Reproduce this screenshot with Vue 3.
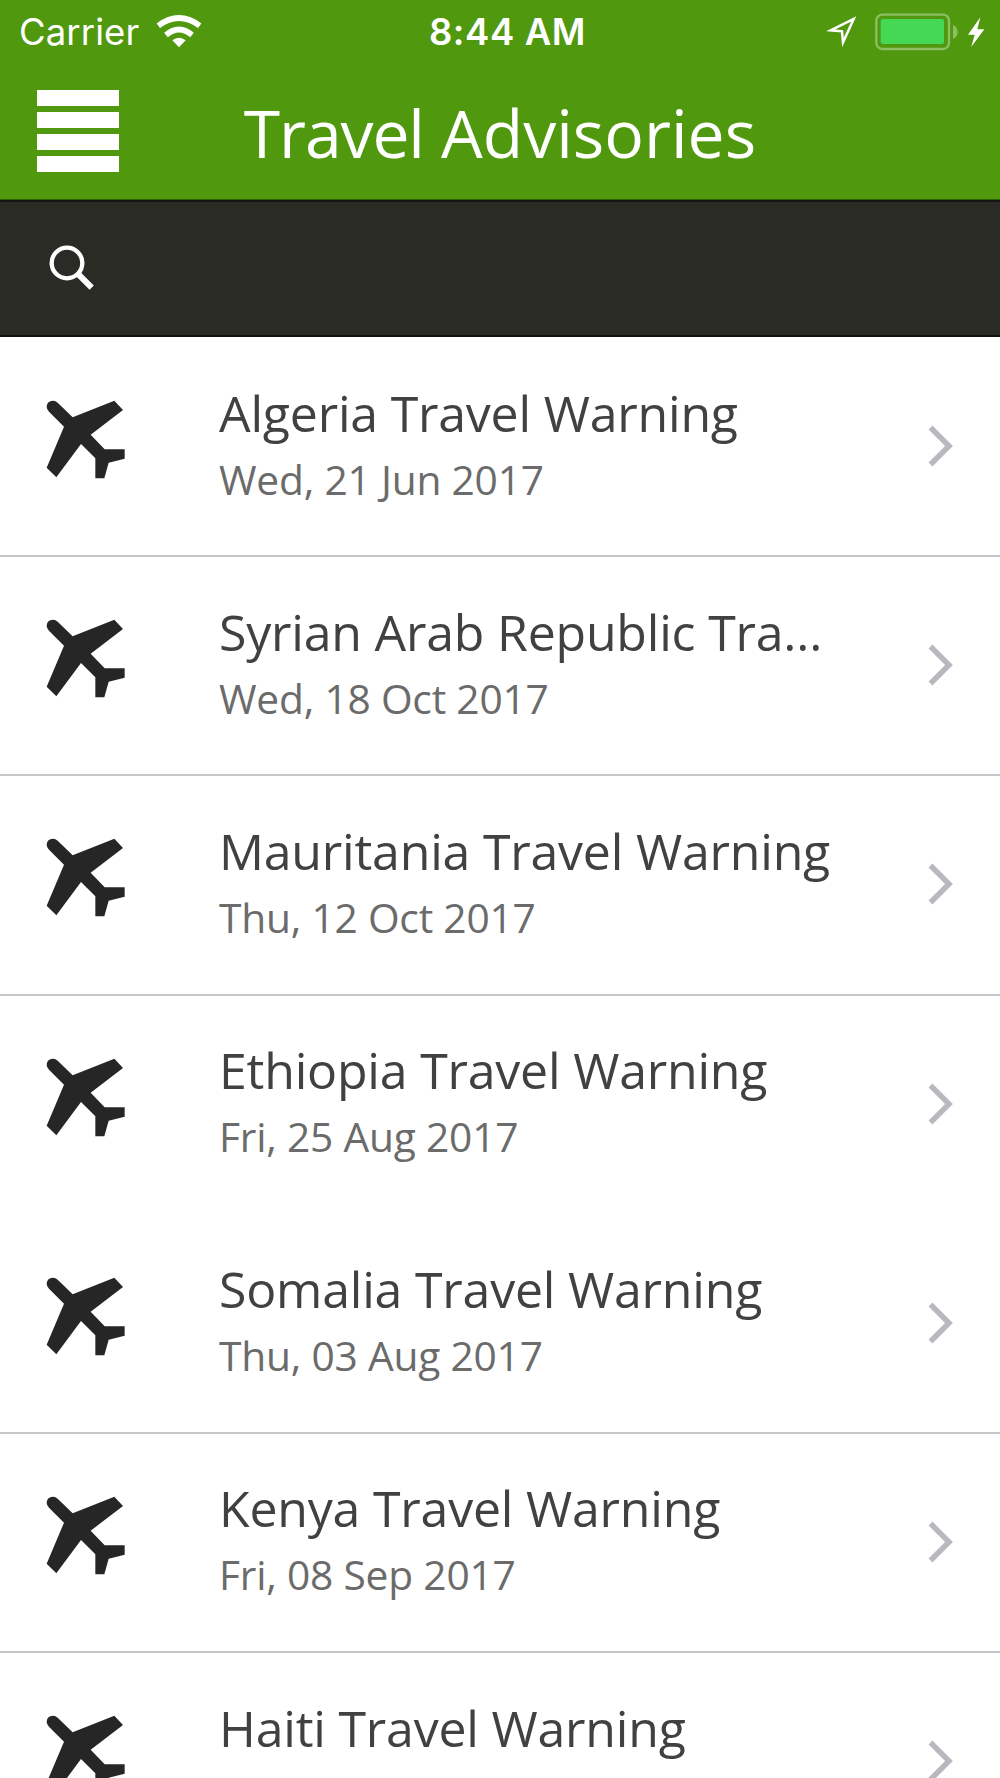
<script setup>
const advisories = [
  { id: 1, title: 'Algeria Travel Warning', date: 'Wed, 21 Jun 2017' },
  { id: 2, title: 'Syrian Arab Republic Tra...', date: 'Wed, 18 Oct 2017' },
  { id: 3, title: 'Mauritania Travel Warning', date: 'Thu, 12 Oct 2017' },
  { id: 4, title: 'Ethiopia Travel Warning', date: 'Fri, 25 Aug 2017', plain: true },
  { id: 5, title: 'Somalia Travel Warning', date: 'Thu, 03 Aug 2017' },
  { id: 6, title: 'Kenya Travel Warning', date: 'Fri, 08 Sep 2017' },
  { id: 7, title: 'Haiti Travel Warning', date: '' }
]
</script>

<template>
  <div class="screen">
    <header class="top">
      <div class="status-bar">
        <div class="status-left">
          <span class="carrier">Carrier</span>
          <svg class="wifi" width="46" height="34" viewBox="0 0 138 102" fill="none" stroke="#fff">
            <path d="M7 32 Q69 -14 131 32" stroke-width="17" />
            <path d="M30 60 Q69 27 108 60" stroke-width="17" />
            <path d="M49 76 Q69 60 89 76 L69 97 Z" fill="#fff" stroke="none" />
          </svg>
        </div>
        <span class="time">8:44 AM</span>
        <div class="status-right">
          <svg width="34" height="34" viewBox="0 0 102 102" fill="none" stroke="#fff" stroke-width="7.5">
            <path d="M89 12 L57 82 L54 49 L20 46 Z" stroke-linejoin="miter" />
          </svg>
          <svg class="battery" width="84" height="38" viewBox="0 0 252 114">
            <rect x="4" y="5" width="218" height="103" rx="18" fill="none" stroke="#8bbf62" stroke-width="7" />
            <rect x="17" y="18" width="190" height="75" rx="7" fill="#45d854" />
            <path d="M234 36 Q248 42 248 57 Q248 72 234 78 Z" fill="#8bbf62" />
          </svg>
          <svg class="bolt" width="18" height="32" viewBox="0 0 54 96">
            <path d="M40 4 L3 56 H23 L13 92 L52 40 H31 Z" fill="#fff" />
          </svg>
        </div>
      </div>
      <div class="nav-bar">
        <button class="menu" title="Menu">
          <span></span>
          <span></span>
          <span></span>
          <span></span>
        </button>
        <h1><span class="tight">Travel</span> Advisories</h1>
      </div>
    </header>

    <div class="search-bar">
      <svg width="46" height="48" viewBox="0 0 138 144" fill="none" stroke="#fff">
        <circle cx="54" cy="57" r="46" stroke-width="13" />
        <path d="M86 89 L128 131" stroke-width="18" />
      </svg>
    </div>

    <ul class="list">
      <li v-for="item in advisories" :key="item.id" class="row" :class="{ plain: item.plain }">
        <svg class="plane" width="80" height="80" viewBox="0 0 240 240" fill="#262626">
          <path d="M2 21 Q2 3 21 2 Q29 2 35 8 L80 52 L205 2 L231 30 L134 104 L176 148 H236 V176 L188 188 L175 235 H148 V175 L105 132 L31 232 L2 203 L54 80 L9 35 Q2 28 2 21 Z" />
        </svg>
        <div class="text">
          <p class="title">{{ item.title }}</p>
          <p class="date">{{ item.date }}</p>
        </div>
        <svg class="chevron" width="26" height="42" viewBox="0 0 26 42" fill="none" stroke="#b9b8be" stroke-width="5.5">
          <path d="M2.5 2.5 L21 21 L2.5 39.5" />
        </svg>
      </li>
    </ul>
  </div>
</template>

<style>
body {
  margin: 0;
  background: #fff;
}
</style>

<style scoped>
.screen {
  width: 1000px;
  height: 1778px;
  overflow: hidden;
  background: #fff;
  font-family: "Open Sans", sans-serif;
}

.top {
  box-sizing: border-box;
  height: 200px;
  background: #50990f;
  border-bottom: 1px solid #2c6500;
  color: #fff;
}

.status-bar {
  display: grid;
  grid-template-columns: 1fr auto 1fr;
  align-items: center;
  height: 64px;
  padding: 0 15px 0 19px;
  font-family: Inter, sans-serif;
  font-size: 36.5px;
}

.status-left,
.status-right {
  display: flex;
  align-items: center;
}

.status-right {
  justify-content: flex-end;
}

.carrier {
  letter-spacing: 0.1px;
}

.wifi {
  margin-left: 17px;
}

.time {
  padding-left: 11px;
  font-weight: 600;
  letter-spacing: 0.6px;
}

.battery {
  margin-left: 17px;
}

.bolt {
  margin-left: 8px;
}

.nav-bar {
  display: grid;
  grid-template-columns: 119px 1fr 119px;
  height: 135px;
}

.menu {
  display: flex;
  flex-direction: column;
  gap: 6px;
  width: 82px;
  margin: 26px 0 0 37px;
  padding: 0;
  background: none;
  border: none;
}

.menu span {
  width: 82px;
  height: 16px;
  background: #fff;
}

h1 {
  margin: 0;
  font-size: 66px;
  font-weight: 400;
  line-height: 136px;
  text-align: center;
}

.tight {
  letter-spacing: -1.1px;
}

.tight::first-letter {
  letter-spacing: -4px;
}

.search-bar {
  box-sizing: border-box;
  height: 137px;
  padding: 42px 0 0 49px;
  background: #2b2b26;
  border-top: 2px solid #171314;
  border-bottom: 2px solid #11110f;
}

.list {
  margin: 0;
  padding: 1px 0 0;
  list-style: none;
}

.row {
  display: flex;
  box-sizing: border-box;
  height: 219.2px;
  border-bottom: 2px solid #c7c7cb;
}

.row.plain {
  border-bottom-color: transparent;
}

.plane {
  flex: none;
  margin: 62px 93px 0 46px;
}

.text {
  width: 620px;
  padding-top: 36.5px;
}

.title,
.date {
  margin: 0;
  letter-spacing: -0.2px;
  white-space: nowrap;
}

.title {
  color: #414141;
  font-size: 50px;
  line-height: 76px;
}

.date {
  color: #6b6b6b;
  font-size: 40.7px;
  line-height: 56px;
}

.chevron {
  flex: none;
  margin: 87px 0 0 89px;
}
</style>
